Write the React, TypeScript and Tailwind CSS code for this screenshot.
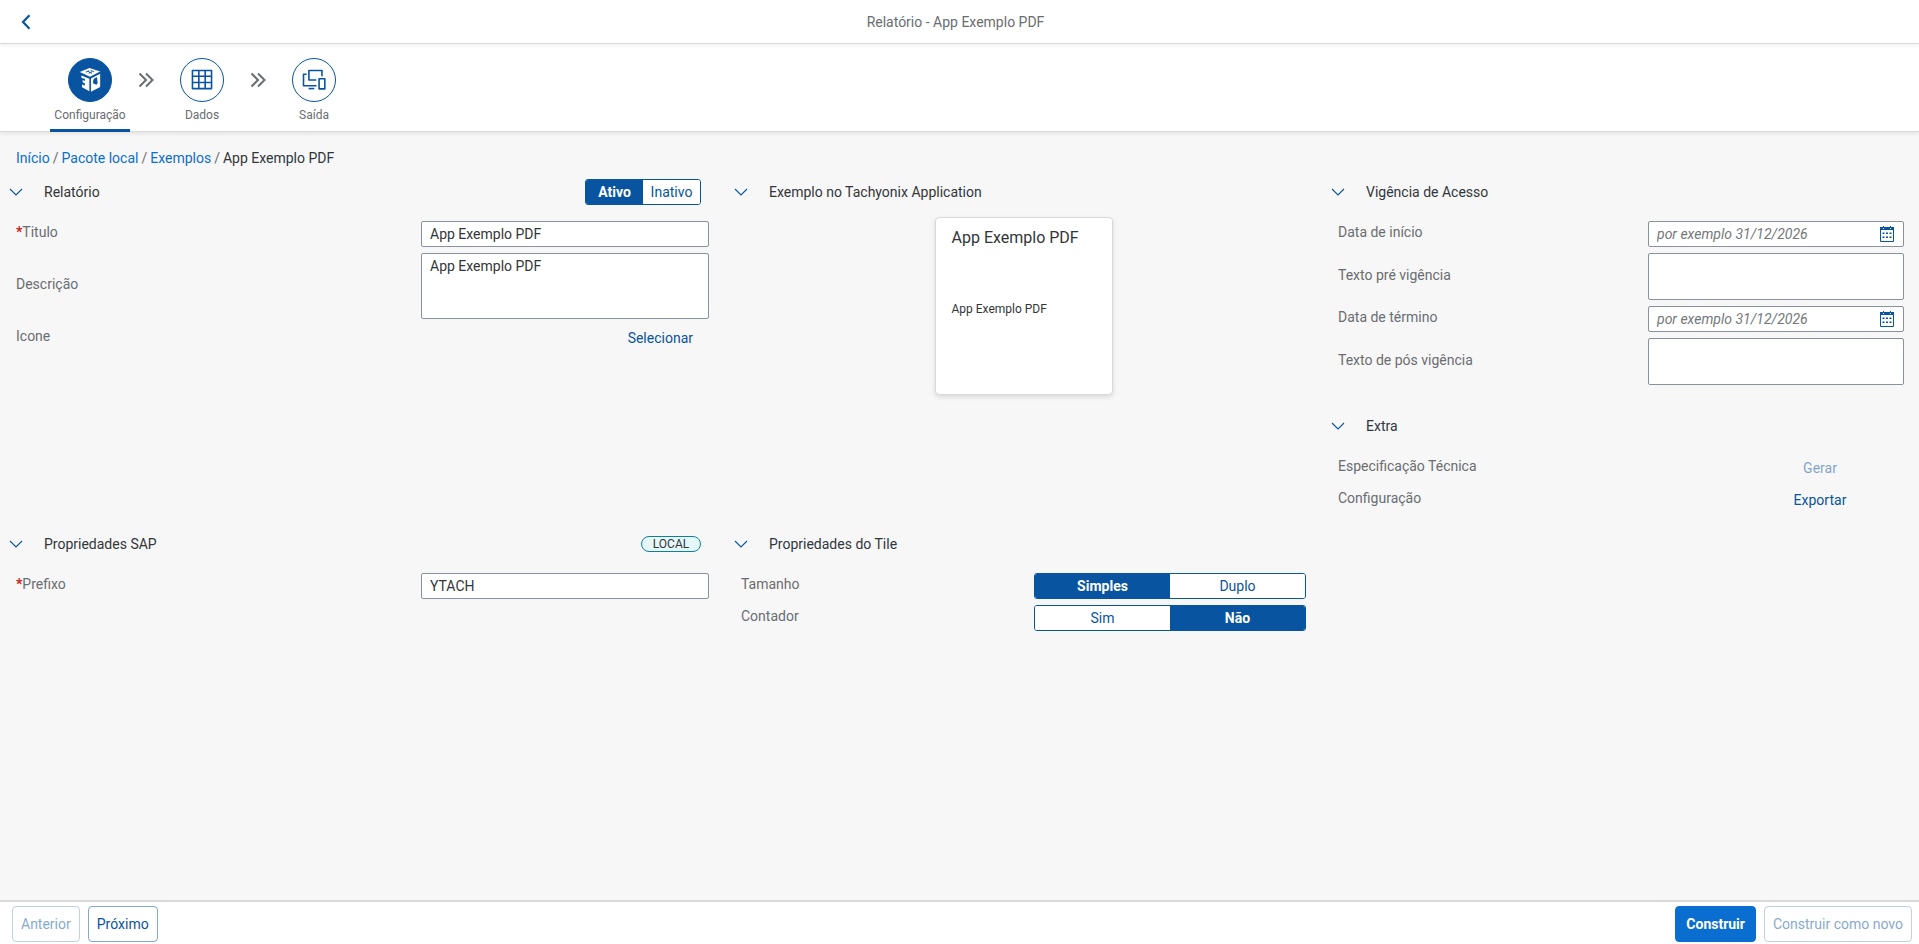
import React, { useState } from 'react';

const steps = [
    { id: 'config', label: 'Configuração' },
    { id: 'data', label: 'Dados' },
    { id: 'output', label: 'Saída' },
];

const inputClass = 'block w-full h-[26px] px-2 bg-white border border-[#89919a] rounded-[2px] text-[#32363a] outline-none focus:border-[#0854a0]';
const areaClass = 'block w-full px-2 py-[3px] bg-white border border-[#89919a] rounded-[2px] leading-[18px] text-[#32363a] resize-none outline-none focus:border-[#0854a0]';

const StepIcon: React.FC<{ id: string }> = ({ id }) => {
    if (id === 'config') {
        return (
            <svg width="44" height="44" viewBox="0 0 132 132" fill="currentColor" aria-hidden="true">
                <path d="M34 41 L64 28 L98 39 L66 56 Z" />
                <path d="M39 52 L64 62 V101 L41 89 V80 L50 83 V77 L43 73 V66 L50 69 V62 L39 60 Z" />
                <path fillRule="evenodd" d="M69 61 L98 46 V88 L69 103 Z M88 57 C79 58 74 67 76 76 C79 80 83 77 85 82 L90 76 Z" />
                <path d="M53 41 L63 37 M62 45 L72 40 M68 36 L78 40 M60 39 L72 45" stroke="#0854a0" strokeWidth="3" fill="none" />
            </svg>
        );
    }
    if (id === 'data') {
        return (
            <svg width="44" height="44" viewBox="0 0 132 132" fill="none" stroke="currentColor" strokeWidth="5" strokeLinejoin="round" aria-hidden="true">
                <path d="M36 36 H96 V93 H36 Z M36 54 H96 M36 74 H96 M56 36 V93 M76 36 V93" />
            </svg>
        );
    }
    return (
        <svg width="44" height="44" viewBox="0 0 132 132" fill="none" stroke="currentColor" strokeWidth="5" strokeLinejoin="round" aria-hidden="true">
            <path d="M43 48 H33 V84 H74" />
            <path d="M49 93 H67" />
            <path d="M73 66 H50 V36 H91 V54" />
            <path d="M82 62 H100 V94 H82 Z" />
        </svg>
    );
};

const DoubleArrow = () => (
    <svg width="16" height="16" viewBox="0 0 16 16" fill="none" stroke="#6a6d70" strokeWidth="2" aria-hidden="true">
        <path d="M1.5 1.5 L8 8 L1.5 14.5 M8 1.5 L14.5 8 L8 14.5" />
    </svg>
);

const CalendarIcon = () => (
    <svg width="14" height="16" viewBox="0 0 14 16" aria-hidden="true">
        <path d="M0.5 2.5 H13.5 V15.5 H0.5 Z" fill="none" stroke="#0854a0" strokeWidth="1" />
        <path d="M0 1 H14 V4 H0 Z M3 0 H4 V2 H3 Z M10 0 H11 V2 H10 Z" fill="#0854a0" />
        <path d="M2.5 6.5H4.5V8H2.5z M6 6.5H8V8H6z M9.5 6.5H11.5V8H9.5z M2.5 10.5H4.5V12H2.5z M6 10.5H8V12H6z M9.5 10.5H11.5V12H9.5z" fill="#0854a0" />
        <path d="M3 2h1v1h-1z M10 2h1v1h-1z" fill="#fff" />
    </svg>
);

interface PanelProps {
    title: string;
    extra?: React.ReactNode;
    children: React.ReactNode;
}

const Panel: React.FC<PanelProps> = ({ title, extra, children }) => {
    const [open, setOpen] = useState(true);
    return (
        <section>
            <div className="flex items-center h-8 pr-6">
                <button type="button" aria-label={title} aria-expanded={open} onClick={() => setOpen(!open)} className="flex items-center justify-center w-8 h-8 mr-3">
                    <svg width="14" height="8" viewBox="0 0 14 8" fill="none" stroke="#0854a0" strokeWidth="1.1" className={open ? '' : '-rotate-90'} aria-hidden="true">
                        <path d="M1 1 L7 7 L13 1" />
                    </svg>
                </button>
                <h2 className="flex-1 text-[#32363a]">{title}</h2>
                {extra}
            </div>
            {open && children}
        </section>
    );
};

interface FieldProps {
    label: string;
    id?: string;
    required?: boolean;
    children: React.ReactNode;
}

// label + control, columns come from the parent grid
const Field: React.FC<FieldProps> = ({ label, id, required, children }) => (
    <>
        <label htmlFor={id} className="self-center pb-1 text-[#6a6d70]">
            {required && <span className="font-bold text-[#cc1919]">*</span>}{label}
        </label>
        <div>{children}</div>
    </>
);

interface SegmentedProps {
    label: string;
    options: string[];
    initial: string;
    className?: string;
}

const Segmented: React.FC<SegmentedProps> = ({ label, options, initial, className }) => {
    const [value, setValue] = useState(initial);
    return (
        <div role="group" aria-label={label} className={`grid grid-cols-2 h-[26px] border border-[#0854a0] rounded-[3px] overflow-hidden ${className || ''}`}>
            {options.map((o) => (
                <button key={o} type="button" aria-pressed={value === o} onClick={() => setValue(o)}
                    className={value === o ? 'bg-[#0854a0] text-white font-bold' : 'bg-white text-[#0854a0]'}>{o}</button>
            ))}
        </div>
    );
};

const DateField: React.FC<{ id: string }> = ({ id }) => (
    <div className="flex items-center h-[26px] pl-2 pr-[9px] bg-white border border-[#89919a] rounded-[2px]">
        <input id={id} type="text" placeholder="por exemplo 31/12/2026" className="flex-1 min-w-0 text-[#32363a] placeholder:italic placeholder:text-[#74777a] outline-none" />
        <button type="button" aria-label="Abrir calendário"><CalendarIcon /></button>
    </div>
);

const App: React.FC = () => {
    const [step, setStep] = useState('config');
    const [title, setTitle] = useState('App Exemplo PDF');
    const [description, setDescription] = useState('App Exemplo PDF');
    const [prefix, setPrefix] = useState('YTACH');

    return (
        <div className="flex flex-col min-h-screen bg-[#f7f7f7] text-sm text-[#32363a] font-[Roboto,'Liberation_Sans',sans-serif]">
            <header className="relative z-20 flex items-center h-11 pl-2 pr-13 bg-white border-b border-[#d9d9d9] shadow-[0_2px_4px_rgba(0,0,0,0.06)]">
                <button type="button" aria-label="Voltar" className="flex items-center justify-center w-9 h-9">
                    <svg width="10" height="16" viewBox="0 0 10 16" fill="none" stroke="#0854a0" strokeWidth="2.2" aria-hidden="true">
                        <path d="M8.5 1.2 L2 8 L8.5 14.8" />
                    </svg>
                </button>
                <h1 className="flex-1 text-center text-[#6a6d70]">Relatório - App Exemplo PDF</h1>
            </header>

            <nav className="relative z-10 flex h-[88px] pl-[50px] bg-white border-b border-[#d9d9d9] shadow-[0_2px_4px_rgba(0,0,0,0.08)]">
                {steps.map((s, i) => (
                    <React.Fragment key={s.id}>
                        {i > 0 && <div className="flex justify-center w-8 pt-7"><DoubleArrow /></div>}
                        <button type="button" onClick={() => setStep(s.id)}
                            className={`flex flex-col items-center w-20 h-[88px] pt-[14px] border-b-[3px] text-xs text-[#6a6d70] ${step === s.id ? 'border-[#0854a0]' : 'border-transparent'}`}>
                            <span className={`flex items-center justify-center w-11 h-11 mb-[5px] rounded-full border border-[#0854a0] ${step === s.id ? 'bg-[#0854a0] text-white' : 'bg-white text-[#0854a0]'}`}>
                                <StepIcon id={s.id} />
                            </span>
                            {s.label}
                        </button>
                    </React.Fragment>
                ))}
            </nav>

            <main className="flex-1">
                <nav aria-label="Caminho" className="flex items-center gap-[3px] h-11 px-4 pt-2 text-[#6a6d70]">
                    <a href="#inicio" className="text-[#0a6ed1]">Início</a>
                    <span>/</span>
                    <a href="#pacote" className="text-[#0a6ed1]">Pacote local</a>
                    <span>/</span>
                    <a href="#exemplos" className="text-[#0a6ed1]">Exemplos</a>
                    <span>/</span>
                    <span className="text-[#32363a]">App Exemplo PDF</span>
                </nav>

                <div className="grid grid-cols-[725fr_597fr_597fr] items-start">
                    <Panel title="Relatório" extra={<Segmented label="Status" options={['Ativo', 'Inativo']} initial="Ativo" className="w-[116px]" />}>
                        <div className="grid grid-cols-[405fr_288fr] gap-y-[6px] px-4 pt-[13px]">
                            <Field label="Titulo" id="title" required>
                                <input id="title" value={title} onChange={(e) => setTitle(e.target.value)} className={inputClass} />
                            </Field>
                            <Field label="Descrição" id="description">
                                <textarea id="description" value={description} onChange={(e) => setDescription(e.target.value)} className={`${areaClass} h-[66px]`} />
                            </Field>
                            <Field label="Icone" id="icon">
                                <div className="flex justify-end pr-2">
                                    <button id="icon" type="button" className="h-[26px] px-2 text-[#0854a0]">Selecionar</button>
                                </div>
                            </Field>
                        </div>
                    </Panel>

                    <Panel title="Exemplo no Tachyonix Application">
                        <div className="pt-[9px]">
                            <article className="w-[178px] h-[178px] mx-auto px-4 pt-2 bg-white border border-[#d9d9d9] rounded shadow-[0_2px_5px_rgba(0,0,0,0.12)]">
                                <h3 className="h-[75px] text-base">{title}</h3>
                                <p className="text-xs">{description}</p>
                            </article>
                        </div>
                    </Panel>

                    <div className="pb-[15px]">
                        <Panel title="Vigência de Acesso">
                            <div className="grid grid-cols-[310fr_256fr] gap-y-[6px] pl-4 pr-[15px] pt-[13px]">
                                <Field label="Data de início" id="start">
                                    <DateField id="start" />
                                </Field>
                                <Field label="Texto pré vigência" id="before">
                                    <textarea id="before" className={`${areaClass} h-[47px]`} />
                                </Field>
                                <Field label="Data de término" id="end">
                                    <DateField id="end" />
                                </Field>
                                <Field label="Texto de pós vigência" id="after">
                                    <textarea id="after" className={`${areaClass} h-[47px]`} />
                                </Field>
                            </div>
                        </Panel>
                        <div className="pt-[25px]">
                            <Panel title="Extra">
                                <div className="grid grid-cols-[398fr_168fr] gap-y-[6px] pl-4 pr-[15px] pt-[13px]">
                                    <Field label="Especificação Técnica" id="generate">
                                        <button id="generate" type="button" disabled className="w-full h-[26px] text-[#0854a0] opacity-50">Gerar</button>
                                    </Field>
                                    <Field label="Configuração" id="export">
                                        <button id="export" type="button" className="w-full h-[26px] text-[#0854a0]">Exportar</button>
                                    </Field>
                                </div>
                            </Panel>
                        </div>
                    </div>

                    <Panel title="Propriedades SAP" extra={<span className="w-[60px] h-4 border border-[#0f828f] rounded-full bg-[#e6f7f9] text-center text-xs leading-[14px]">LOCAL</span>}>
                        <div className="grid grid-cols-[405fr_288fr] gap-y-[6px] px-4 pt-[13px]">
                            <Field label="Prefixo" id="prefix" required>
                                <input id="prefix" value={prefix} onChange={(e) => setPrefix(e.target.value)} className={inputClass} />
                            </Field>
                        </div>
                    </Panel>

                    <Panel title="Propriedades do Tile">
                        <div className="grid grid-cols-[293fr_272fr] gap-y-[6px] px-4 pt-[13px]">
                            <Field label="Tamanho">
                                <Segmented label="Tamanho" options={['Simples', 'Duplo']} initial="Simples" />
                            </Field>
                            <Field label="Contador">
                                <Segmented label="Contador" options={['Sim', 'Não']} initial="Não" />
                            </Field>
                        </div>
                    </Panel>
                </div>
            </main>

            <footer className="flex items-start gap-2 h-11 pl-3 pr-[7px] pt-1 bg-white border-t-2 border-[#d9d9d9]">
                <button type="button" disabled className="h-9 px-2 border border-[#0854a0]/50 rounded text-[#0854a0] opacity-50">Anterior</button>
                <button type="button" className="h-9 px-2 border border-[#0854a0]/50 rounded text-[#0854a0]">Próximo</button>
                <button type="button" className="h-9 px-[10px] ml-auto border border-[#0a6ed1] rounded bg-[#0a6ed1] font-bold text-white">Construir</button>
                <button type="button" disabled className="h-9 px-2 border border-[#0854a0]/50 rounded text-[#0854a0] opacity-50">Construir como novo</button>
            </footer>
        </div>
    );
};

export default App;
